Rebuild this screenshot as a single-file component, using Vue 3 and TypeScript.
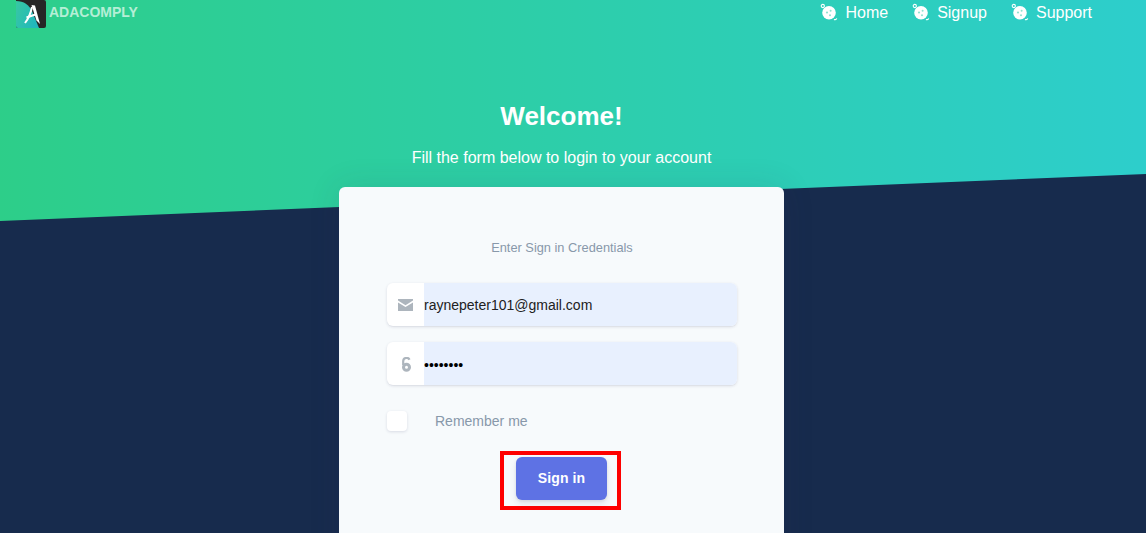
<script setup lang="ts">
import { ref } from "vue";

interface NavLink {
  label: string;
}

const links: NavLink[] = [{ label: "Home" }, { label: "Signup" }, { label: "Support" }];
const email = ref("raynepeter101@gmail.com");
const password = ref("password");
const remember = ref(false);
</script>

<template>
  <div class="page">
    <div class="backdrop"></div>

    <header class="nav">
      <div class="brand">
        <svg class="logo" width="30" height="28" viewBox="0 0 30 28">
          <defs>
            <linearGradient id="logoTeal" x1="0" y1="0" x2="1" y2="0.4">
              <stop offset="0" stop-color="#38c8a2" />
              <stop offset="1" stop-color="#22b8bc" />
            </linearGradient>
          </defs>
          <path d="M0 0H28a2 2 0 0 1 2 2V26a2 2 0 0 1-2 2H2a2 2 0 0 1-2-2Z" fill="#262626" />
          <path d="M0 1C8 1 13 5 16 11L23 28H2a2 2 0 0 1-2-2Z" fill="url(#logoTeal)" />
          <path d="M16 7C15 12 13 18 9 23" fill="none" stroke="#ffffff" stroke-width="2" />
          <path d="M15.500 5L19 5.500L24 24L20.500 20.500Z" fill="#ffffff" />
          <path d="M10.500 17.500L19.500 14.500" fill="none" stroke="#ffffff" stroke-width="2.200" />
        </svg>
        <span class="brand-name">ADACOMPLY</span>
      </div>
      <nav class="links">
        <a v-for="link in links" :key="link.label" class="link" href="#">
          <svg class="planet" width="17" height="17" viewBox="0 0 17 17">
            <circle cx="9" cy="8.800" r="6.800" fill="#ffffff" />
            <circle cx="2.800" cy="2" r="1.600" fill="none" stroke="#ffffff" stroke-width="1.100" />
            <path d="M14 15.400a1.800 1.800 0 0 0 2.700-1.100" fill="none" stroke="#ffffff" stroke-width="1.200" />
            <circle cx="7" cy="8.500" r="1.100" fill="#8fe3d0" />
            <circle cx="10.600" cy="6.800" r="1" fill="#8fe3d0" />
            <circle cx="10" cy="11.200" r="1" fill="#8fe3d0" />
          </svg>
          {{ link.label }}
        </a>
      </nav>
    </header>

    <main class="main">
      <h1 class="title">Welcome!</h1>
      <p class="lead">Fill the form below to login to your account</p>

      <section class="card">
        <p class="hint">Enter Sign in Credentials</p>

        <div class="field">
          <span class="addon">
            <svg width="15" height="12" viewBox="0 0 15 12">
              <path d="M0 0H15V1.600L7.500 6.200L0 1.600Z" fill="#adb5bd" />
              <path d="M0 3.400L7.500 8L15 3.400V12H0Z" fill="#adb5bd" />
            </svg>
          </span>
          <input v-model="email" class="input" type="text" />
        </div>

        <div class="field">
          <span class="addon">
            <svg class="lock" width="11" height="15" viewBox="0 0 11 15">
              <path d="M2.200 8V4.200a3.300 3.300 0 0 1 6.300-1.400" fill="none" stroke="#adb5bd" stroke-width="2.200" />
              <circle cx="5.500" cy="10.200" r="3" fill="none" stroke="#adb5bd" stroke-width="3" />
            </svg>
          </span>
          <input v-model="password" class="input secret" type="password" />
        </div>

        <label class="remember">
          <input v-model="remember" class="check" type="checkbox" />
          <span>Remember me</span>
        </label>

        <div class="actions">
          <div class="highlight">
            <button class="submit" type="button">Sign in</button>
          </div>
        </div>
      </section>
    </main>
  </div>
</template>

<style>
html,
body {
  margin: 0;
  height: 100%;
  overflow: hidden;
  background: #172b4d;
}
</style>

<style scoped>
.page {
  position: relative;
  height: 533px;
  overflow: hidden;
  background: #172b4d;
  font-family: "Liberation Sans", Arial, sans-serif;
}

.backdrop {
  position: absolute;
  inset: 0 0 auto 0;
  height: 221px;
  background: linear-gradient(87deg, #2dce89 0, #2dcecc 100%);
  clip-path: polygon(0 0, 100% 0, 100% 174px, 0 100%);
}

.nav {
  position: relative;
  display: flex;
  justify-content: space-between;
  height: 28px;
  padding: 0 54px 0 16px;
}

.brand {
  display: flex;
  align-items: flex-start;
  gap: 3px;
}

.brand-name {
  margin-top: 4px;
  font-size: 14px;
  line-height: 16px;
  font-weight: 700;
  color: #b5eed6;
}

.links {
  display: flex;
  gap: 24px;
}

.link {
  display: flex;
  align-items: center;
  gap: 8px;
  height: 25px;
  font-size: 16px;
  color: #ffffff;
  text-decoration: none;
}

.planet {
  overflow: visible;
}

.main {
  position: relative;
  display: flex;
  flex-direction: column;
  align-items: center;
  padding-right: 23px;
}

.title {
  margin: 73px 0 0;
  font-size: 26px;
  line-height: 30px;
  font-weight: 700;
  color: #ffffff;
}

.lead {
  margin: 15px 0 0;
  font-size: 16px;
  line-height: 24px;
  color: #ffffff;
}

.card {
  box-sizing: border-box;
  width: 445px;
  height: 400px;
  margin-top: 17px;
  padding: 0 47px 0 48px;
  background: #f7fafc;
  border-radius: 6px;
  box-shadow: 0 0 32px rgba(50, 50, 93, 0.12);
}

.hint {
  margin: 53px 0 27px;
  text-align: center;
  font-size: 12.800px;
  line-height: 16px;
  color: #8898aa;
}

.field {
  display: flex;
  height: 43px;
  margin-bottom: 16px;
  border-radius: 6px;
  overflow: hidden;
  background: #ffffff;
  box-shadow: 0 1px 3px rgba(50, 50, 93, 0.15), 0 1px 0 rgba(0, 0, 0, 0.02);
}

.addon {
  display: flex;
  align-items: center;
  justify-content: center;
  flex: none;
  width: 37px;
  box-sizing: border-box;
}

.lock {
  margin: 2px 0 0 2px;
}

.input {
  flex: 1;
  min-width: 0;
  padding: 0;
  border: 0;
  outline: 0;
  background: #e8f0fe;
  font-family: inherit;
  font-size: 14px;
  color: #212121;
}

.secret {
  padding-top: 2px;
  color: #000000;
  font-size: 14px;
}

.remember {
  display: flex;
  align-items: center;
  gap: 28px;
  margin-top: 26px;
  font-size: 14px;
  line-height: 20px;
  color: #8898aa;
}

.check {
  appearance: none;
  width: 20px;
  height: 20px;
  margin: 0;
  background: #ffffff;
  border-radius: 4px;
  box-shadow: 0 1px 3px rgba(50, 50, 93, 0.15);
}

.actions {
  display: flex;
  justify-content: center;
  margin-top: 20px;
  padding-right: 4px;
}

.highlight {
  box-sizing: border-box;
  width: 121px;
  height: 59px;
  padding: 2px 10px 0 12px;
  border: 4px solid #fe0000;
}

.submit {
  display: block;
  box-sizing: border-box;
  width: 91px;
  height: 43px;
  padding: 0 0 2px 1px;
  border: 0;
  border-radius: 6px;
  background: #5e72e4;
  color: #ffffff;
  font-family: inherit;
  font-size: 14px;
  font-weight: 700;
  letter-spacing: 0.1px;
  box-shadow: 0 4px 6px rgba(50, 50, 93, 0.11), 0 1px 3px rgba(0, 0, 0, 0.08);
}
</style>
